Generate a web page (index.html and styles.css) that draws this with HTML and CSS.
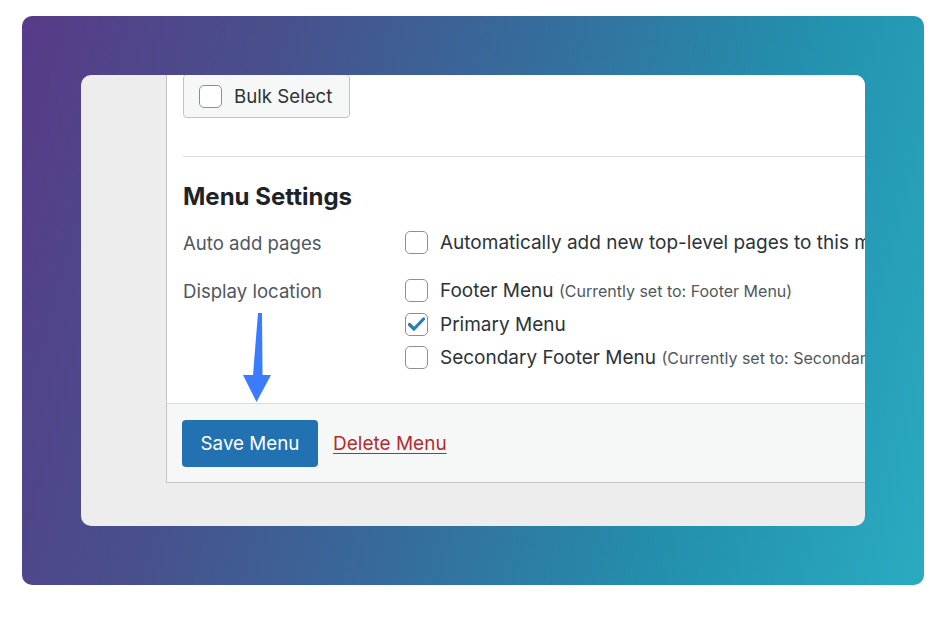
FILE: index.html
```html
<!doctype html>
<html lang="en">
<head>
    <meta charset="UTF-8">
    <title>Menu Settings</title>
    <link rel="stylesheet" href="styles.css">
</head>
<body>
<div class="frame">
    <div class="window">
        <div class="panel">
            <div class="panel-body">
                <label class="bulk">
                    <span class="box"></span>
                    <span>Bulk Select</span>
                </label>
                <hr class="sep">
                <h3 class="title">Menu Settings</h3>
                <div class="row">
                    <div class="label">Auto add pages</div>
                    <div class="opts">
                        <label class="opt">
                            <span class="box"></span>
                            <span>Automatically add new top-level pages to this menu</span>
                        </label>
                    </div>
                </div>
                <div class="row row-loc">
                    <div class="label">Display location</div>
                    <div class="opts">
                        <label class="opt">
                            <span class="box"></span>
                            <span>Footer Menu <small>(Currently set to: Footer Menu)</small></span>
                        </label>
                        <label class="opt">
                            <span class="box checked">
                                <svg width="17" height="14" viewBox="0 0 17 14"><path d="M1.5 7.5 L6 12 L15.5 2" fill="none" stroke="#2a7fae" stroke-width="3.2" stroke-linecap="round" stroke-linejoin="round"/></svg>
                            </span>
                            <span>Primary Menu</span>
                        </label>
                        <label class="opt">
                            <span class="box"></span>
                            <span>Secondary Footer Menu <small>(Currently set to: Secondary Footer Menu)</small></span>
                        </label>
                    </div>
                </div>
                <svg class="arrow" width="30" height="92" viewBox="0 0 30 92">
                    <path d="M15 0 L19 0 L19.5 62 L28 62 L13.5 89 L0 62 L10 62 Z" fill="#3b7cff"/>
                </svg>
            </div>
            <div class="panel-foot">
                <button class="save">Save Menu</button>
                <a class="delete" href="#">Delete Menu</a>
            </div>
        </div>
    </div>
</div>
</body>
</html>
```

FILE: styles.css
```css
* {
    margin: 0;
    padding: 0;
    box-sizing: border-box;
}

body {
    background: #fff;
    font-family: Inter, "Noto Sans", sans-serif;
}

.frame {
    width: 902px;
    height: 569px;
    margin: 16px 0 0 22px;
    padding: 59px;
    border-radius: 10px;
    background: linear-gradient(105deg, #573b88 0%, #48508c 25%, #356d9c 50%, #2390ae 75%, #2aabc0 100%);
}

.window {
    height: 451px;
    padding-left: 85px;
    border-radius: 10px;
    background: #ededed;
    overflow: hidden;
}

.panel {
    width: 900px;
    background: #fff;
    border-left: 1px solid #c3c4c7;
    border-bottom: 1px solid #c3c4c7;
}

.panel-body {
    position: relative;
    height: 328px;
    padding-left: 16px;
}

.box {
    display: inline-flex;
    align-items: center;
    justify-content: center;
    width: 23px;
    height: 23px;
    border: 1.5px solid #8c8f94;
    border-radius: 5px;
    background: #fff;
    flex: none;
}

.bulk {
    display: inline-flex;
    align-items: center;
    gap: 12px;
    width: 167px;
    height: 44px;
    margin-top: -1px;
    padding-left: 15px;
    border: 1px solid #c3c4c7;
    border-radius: 4px;
    background: #f6f7f7;
    color: #2c3338;
    font-size: 18.7px;
}

.sep {
    margin-top: 38px;
    border: 0;
    border-top: 1px solid #dcdcde;
}

.title {
    margin-top: 25px;
    color: #1d2327;
    font-size: 24px;
    font-weight: 700;
    line-height: 30px;
}

.row {
    display: flex;
    margin-top: 14px;
}

.row-loc {
    margin-top: 14px;
}

.label {
    width: 222px;
    color: #50575e;
    font-size: 18.6px;
    line-height: 34px;
}

.opts {
    display: flex;
    flex-direction: column;
}

.opt {
    display: flex;
    align-items: center;
    gap: 12px;
    height: 33.5px;
    color: #2c3338;
    font-size: 19px;
    white-space: nowrap;
}

.opt small {
    color: #50575e;
    font-size: 16px;
}

.arrow {
    position: absolute;
    left: 76px;
    top: 238px;
}

.panel-foot {
    height: 79px;
    padding: 15px 15px;
    display: flex;
    align-items: center;
    gap: 15px;
    border-top: 1px solid #dcdcde;
    background: #f6f7f7;
}

.save {
    width: 136px;
    height: 47px;
    border: 0;
    border-radius: 4px;
    background: #2271b1;
    color: #fff;
    font-family: inherit;
    font-size: 18.8px;
}

.delete {
    color: #b32d2e;
    font-size: 19px;
    text-decoration: underline;
    text-underline-offset: 3px;
}
```
